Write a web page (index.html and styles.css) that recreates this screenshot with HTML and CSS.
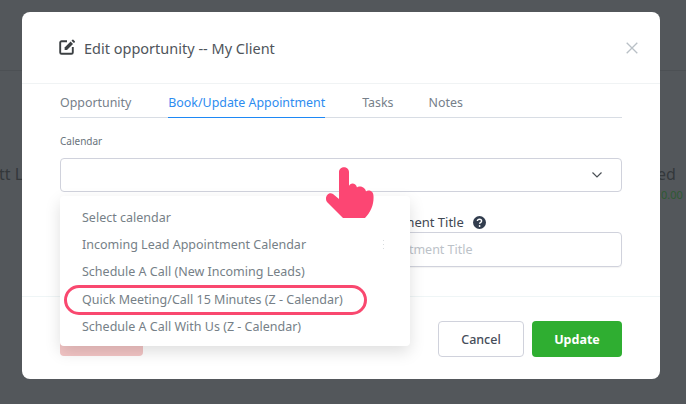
FILE: index.html
```html
<!DOCTYPE html>
<html lang="en">
<head>
    <meta charset="UTF-8">
    <title>Edit opportunity</title>
    <link rel="stylesheet" href="styles.css">
</head>
<body>
    <div class="backdrop-line"></div>
    <div class="backdrop-text backdrop-left">tt L</div>
    <div class="backdrop-text backdrop-right">ed</div>
    <div class="backdrop-money">0.00</div>

    <div class="modal">
        <div class="modal-header">
            <svg class="edit-icon" width="16" height="16" viewBox="0 0 16 16">
                <path d="M8 2.200H2.600A1.400 1.400 0 0 0 1.200 3.600v9.800a1.400 1.400 0 0 0 1.400 1.400h9.800a1.400 1.400 0 0 0 1.400-1.400V8" fill="none" stroke="#3c4043" stroke-width="1.900"/>
                <path d="M5.600 8.600 11.600 2.600 14 5 8 11H5.600z" fill="#3c4043"/>
                <path d="M12.500 1.700 13.400.8a.7.7 0 0 1 1 0l1.400 1.400a.7.7 0 0 1 0 1L14.900 4.100z" fill="#3c4043"/>
            </svg>
            <span class="modal-title">Edit opportunity -- My Client</span>
            <svg class="close-icon" width="12" height="12" viewBox="0 0 12 12">
                <path d="M.7.7l10.600 10.600M11.300.7.7 11.300" stroke="#b9c0c6" stroke-width="1.300" fill="none"/>
            </svg>
        </div>

        <div class="modal-body">
            <div class="tabs">
                <span class="tab">Opportunity</span>
                <span class="tab active">Book/Update Appointment</span>
                <span class="tab">Tasks</span>
                <span class="tab">Notes</span>
            </div>

            <div class="field-label">Calendar</div>
            <div class="select-box">
                <svg width="12" height="8" viewBox="0 0 12 8">
                    <path d="M1.500 1.500 6 6l4.500-4.500" fill="none" stroke="#4a4f55" stroke-width="1.200"/>
                </svg>
            </div>

            <div class="title-row">
                <div class="title-col">
                    <div class="title-label">
                        Appointment Title
                        <svg width="13" height="13" viewBox="0 0 13 13">
                            <circle cx="6.500" cy="6.500" r="6.500" fill="#323d4e"/>
                            <path d="M4.400 5.100c0-1.200.9-1.900 2.100-1.900s2.100.7 2.100 1.800c0 1.600-2 1.500-2 2.800" fill="none" stroke="#fff" stroke-width="1.400"/>
                            <circle cx="6.600" cy="10" r=".9" fill="#fff"/>
                        </svg>
                    </div>
                    <div class="text-input">Appointment Title</div>
                </div>
            </div>
        </div>

        <div class="modal-footer">
            <button class="btn btn-delete" aria-label="Delete"></button>
            <button class="btn btn-cancel">Cancel</button>
            <button class="btn btn-update">Update</button>
        </div>
    </div>

    <div class="dropdown">
        <div class="option">Select calendar</div>
        <div class="option">Incoming Lead Appointment Calendar</div>
        <div class="option">Schedule A Call (New Incoming Leads)</div>
        <div class="option">Quick Meeting/Call 15 Minutes (Z - Calendar)</div>
        <div class="option">Schedule A Call With Us (Z - Calendar)</div>
        <div class="drag-dots"></div>
    </div>
    <div class="ring"></div>

    <svg class="hand" width="50" height="54" viewBox="0 0 50 54">
        <path d="M14 7C14 .5 24 .5 24 7V21C25 17.500 31 17.500 32 22.500 33.500 20.500 40 21 41 26.500 43 24.500 48.500 25.500 48.500 31 49 39 46 47 40 53H18L2 37C-1 33 3 26 8 29L14 34z" fill="#fc4673"/>
    </svg>
</body>
</html>
```

FILE: styles.css
```css
html, body {
    margin: 0;
    height: 404px;
    overflow: hidden;
}
body {
    font-family: "Noto Sans", Arial, sans-serif;
    background: #53575b;
    padding: 12px 26px 25px 22px;
    box-sizing: border-box;
    position: relative;
}
.backdrop-line {
    position: absolute;
    left: 0;
    right: 0;
    top: 70px;
    height: 1px;
    background: #4c5054;
}
.backdrop-text {
    position: absolute;
    top: 164px;
    font-size: 16px;
    line-height: 20px;
    color: #34383b;
    white-space: nowrap;
}
.backdrop-left {
    left: -1px;
}
.backdrop-right {
    left: 657px;
}
.backdrop-money {
    position: absolute;
    top: 187px;
    left: 661px;
    font-size: 11px;
    line-height: 15px;
    color: #2f5a33;
}

.modal {
    background: #fff;
    border-radius: 8px;
    height: 367px;
    position: relative;
    display: flex;
    flex-direction: column;
}
.modal-header {
    height: 71px;
    flex: none;
    display: flex;
    align-items: center;
    padding: 0 22px 0 38px;
    border-bottom: 1px solid #f0f3f4;
}
.edit-icon {
    flex: none;
    margin: -2px 9px 0 -1px;
}
.modal-title {
    font-size: 14.500px;
    color: #4f555b;
    flex: 1;
}
.modal-body {
    flex: 1;
    padding: 0 38px;
}
.tabs {
    display: flex;
    gap: 37px;
    height: 34px;
    box-sizing: border-box;
    border-bottom: 1px solid #d8dde4;
}
.tab {
    font-size: 12.400px;
    line-height: 18px;
    padding-top: 10px;
    height: 34px;
    box-sizing: border-box;
    color: #76808a;
}
.tab:last-child {
    margin-left: -2px;
}
.tab.active {
    color: #2d8cf0;
    border-bottom: 1px solid #1e88f5;
}
.field-label {
    font-size: 10px;
    line-height: 14px;
    color: #69737c;
    margin-top: 16px;
}
.select-box {
    margin-top: 10px;
    height: 34px;
    box-sizing: border-box;
    border: 1px solid #d0d2dc;
    border-radius: 4px;
    display: flex;
    align-items: center;
    justify-content: flex-end;
    padding-right: 18px;
}
.title-row {
    display: flex;
    justify-content: flex-end;
    margin-top: 22px;
}
.title-col {
    width: 268px;
}
.title-label {
    font-size: 13px;
    line-height: 17px;
    color: #3f4853;
    white-space: nowrap;
    display: flex;
    align-items: center;
    gap: 9px;
}
.text-input {
    margin-top: 1px;
    height: 35px;
    box-sizing: border-box;
    border: 1px solid #d0d2dc;
    border-radius: 4px;
    box-shadow: 0 1px 1px rgba(0, 0, 0, 0.05);
    padding-left: 12px;
    font-size: 12.500px;
    line-height: 33px;
    color: #bcc2c8;
}
.modal-footer {
    flex: none;
    height: 83px;
    box-sizing: border-box;
    border-top: 1px solid #eff5f6;
    padding: 24px 38px 0;
    display: flex;
    gap: 8px;
    align-items: flex-start;
}
.btn {
    font-family: inherit;
    font-size: 12.500px;
    font-weight: 500;
    height: 36px;
    padding: 0;
    border-radius: 4px;
    border: 1px solid transparent;
}
.btn-delete {
    width: 83px;
    height: 35px;
    margin-right: auto;
    background: #f3c5c5;
}
.btn-cancel {
    width: 86px;
    background: #fff;
    border-color: #d0d2dc;
    color: #464d5a;
}
.btn-update {
    width: 90px;
    background: #2fae31;
    color: #fff;
    font-weight: 700;
}

.dropdown {
    position: absolute;
    left: 60px;
    top: 196px;
    width: 350px;
    height: 150px;
    box-sizing: border-box;
    padding: 8px 0 0;
    background: #fff;
    border-radius: 4px;
    box-shadow: 0 6px 16px rgba(0, 0, 0, 0.13);
}
.option {
    font-size: 12.500px;
    line-height: 27.200px;
    padding-left: 22px;
    color: #767f87;
    white-space: nowrap;
}
.drag-dots {
    position: absolute;
    left: 323px;
    top: 44px;
    width: 1px;
    height: 9px;
    background: repeating-linear-gradient(#d8dcdf 0 1px, transparent 1px 4px);
}
.ring {
    position: absolute;
    left: 64px;
    top: 285px;
    width: 303px;
    height: 30px;
    box-sizing: border-box;
    border: 3px solid #f9486f;
    border-radius: 15px;
}
.hand {
    position: absolute;
    left: 325px;
    top: 165px;
}
```
